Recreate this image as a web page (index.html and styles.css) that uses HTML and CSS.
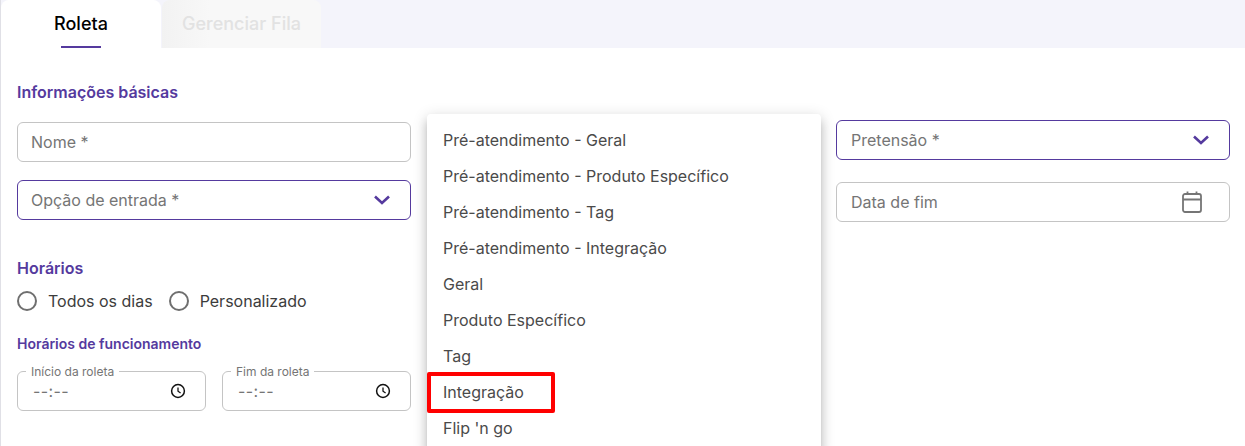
FILE: index.html
```html
<!DOCTYPE html>
<html lang="pt-BR">
<head>
    <meta charset="UTF-8">
    <title>Roleta</title>
    <link rel="stylesheet" href="styles.css">
</head>
<body>
    <div class="tabs">
        <div class="tab active">Roleta</div>
        <div class="tab disabled">Gerenciar Fila</div>
    </div>

    <div class="content">
        <h2 class="section-title">Informações básicas</h2>

        <div class="columns">
            <div class="col col-left">
                <div class="field"><span class="placeholder">Nome *</span></div>
                <div class="field field-select">
                    <span class="placeholder">Opção de entrada *</span>
                    <svg class="chevron" width="18" height="10" viewBox="0 0 18 10"><path d="M2 1.5 L9 8 L16 1.5" fill="none" stroke="#553a9e" stroke-width="2.6"/></svg>
                </div>

                <h2 class="section-title horarios-title">Horários</h2>
                <div class="radios">
                    <label class="radio"><span class="radio-dot"></span>Todos os dias</label>
                    <label class="radio"><span class="radio-dot"></span>Personalizado</label>
                </div>

                <h3 class="sub-title">Horários de funcionamento</h3>
                <div class="times">
                    <div class="field field-time">
                        <span class="legend">Início da roleta</span>
                        <span class="time-value">--:--</span>
                        <svg width="16" height="16" viewBox="0 0 16 16"><circle cx="8" cy="8" r="6.4" fill="none" stroke="#111" stroke-width="1.5"/><path d="M8 4.5 V8.2 L10.6 10" fill="none" stroke="#111" stroke-width="1.3"/></svg>
                    </div>
                    <div class="field field-time">
                        <span class="legend">Fim da roleta</span>
                        <span class="time-value">--:--</span>
                        <svg width="16" height="16" viewBox="0 0 16 16"><circle cx="8" cy="8" r="6.4" fill="none" stroke="#111" stroke-width="1.5"/><path d="M8 4.5 V8.2 L10.6 10" fill="none" stroke="#111" stroke-width="1.3"/></svg>
                    </div>
                </div>
            </div>

            <div class="col col-middle">
                <ul class="menu">
                    <li>Pré-atendimento - Geral</li>
                    <li>Pré-atendimento - Produto Específico</li>
                    <li>Pré-atendimento - Tag</li>
                    <li>Pré-atendimento - Integração</li>
                    <li>Geral</li>
                    <li>Produto Específico</li>
                    <li>Tag</li>
                    <li class="highlighted">Integração</li>
                    <li>Flip 'n go</li>
                </ul>
            </div>

            <div class="col col-right">
                <div class="field field-select">
                    <span class="placeholder">Pretensão *</span>
                    <svg class="chevron" width="18" height="10" viewBox="0 0 18 10"><path d="M2 1.5 L9 8 L16 1.5" fill="none" stroke="#553a9e" stroke-width="2.6"/></svg>
                </div>
                <div class="field field-date">
                    <span class="placeholder">Data de fim</span>
                    <svg width="22" height="24" viewBox="0 0 22 24"><rect x="2" y="4" width="18" height="18" rx="2" fill="none" stroke="#757575" stroke-width="1.8"/><path d="M2 9.5 H20 M6.5 1.5 V5 M15.5 1.5 V5" fill="none" stroke="#757575" stroke-width="1.8"/></svg>
                </div>
            </div>
        </div>
    </div>
</body>
</html>
```

FILE: styles.css
```css
* {
    box-sizing: border-box;
}
html, body {
    height: 100%;
}
body {
    margin: 0;
    font-family: Inter, "Noto Sans", sans-serif;
    background: #fff;
    color: #3c3c3c;
    overflow: hidden;
    border-left: 1px solid #e0e0e6;
}
.tabs {
    display: flex;
    gap: 1px;
    height: 48px;
    background: #f4f4fb;
    margin-left: -1px;
    padding-left: 1px;
}
.tab {
    width: 160px;
    height: 48px;
    display: flex;
    align-items: center;
    justify-content: center;
    font-size: 18px;
    font-weight: 500;
    padding-bottom: 1px;
    border-radius: 8px 8px 0 0;
    position: relative;
}
.tab.active {
    background: #fff;
    color: #000;
}
.tab.active::after {
    content: "";
    position: absolute;
    left: 60px;
    bottom: 0;
    width: 40px;
    height: 2px;
    background: #553a9e;
}
.tab.disabled {
    width: 159px;
    background: linear-gradient(90deg, #f2f2f2, #f8f8f8 30%);
    color: #e2e2e2;
}
.content {
    padding: 35px 15px 0 16px;
}
.section-title {
    margin: 0;
    font-size: 16px;
    line-height: 19px;
    font-weight: 600;
    color: #553a9e;
}
.columns {
    display: grid;
    grid-template-columns: 394px 394px 394px;
    column-gap: 16px;
    margin-top: 20px;
}
.col-right {
    margin-left: -1px;
    margin-right: 1px;
    margin-top: -2px;
    display: flex;
    flex-direction: column;
    gap: 22px;
}
.col-middle {
    position: relative;
}
.field {
    height: 40px;
    border: 1px solid #c4c4c4;
    border-radius: 6px;
    display: flex;
    align-items: center;
    padding: 0 13px;
    font-size: 16px;
    background: #fff;
}
.col-right .field {
    padding-left: 14px;
}
.placeholder {
    color: #757575;
}
.field-select {
    justify-content: space-between;
    border-color: #553a9e;
    padding-right: 19px;
}
.col-left .field-select {
    margin-top: 18px;
}
.field-date {
    justify-content: space-between;
    padding-right: 26px;
}
.horarios-title {
    margin-top: 39px;
}
.radios {
    display: flex;
    gap: 16px;
    margin-top: 11px;
}
.radio {
    display: flex;
    align-items: center;
    gap: 11px;
    font-size: 16px;
    line-height: 24px;
}
.radio-dot {
    width: 20px;
    height: 20px;
    border: 2px solid #6f6f6f;
    border-radius: 50%;
}
.sub-title {
    margin: 23px 0 0;
    font-size: 14px;
    line-height: 16px;
    font-weight: 600;
    color: #553a9e;
}
.times {
    display: flex;
    gap: 16px;
    margin-top: 19px;
}
.field-time {
    flex: 1;
    position: relative;
    justify-content: space-between;
    padding-right: 19px;
}
.legend {
    position: absolute;
    left: 8px;
    top: -8px;
    padding: 0 5px;
    background: #fff;
    font-size: 12px;
    line-height: 15px;
    color: #757575;
}
.time-value {
    color: #757575;
    letter-spacing: 0.4px;
    padding-left: 2px;
}
.menu {
    position: absolute;
    top: -8px;
    left: 0;
    width: 394px;
    height: 340px;
    margin: 0;
    padding: 8px 0;
    list-style: none;
    background: #fff;
    border-radius: 4px;
    box-shadow: 0 5px 5px -3px rgba(0,0,0,.2), 0 8px 10px 1px rgba(0,0,0,.14), 0 3px 14px 2px rgba(0,0,0,.12);
}
.menu li {
    height: 36px;
    line-height: 36px;
    padding: 0 16px;
    font-size: 16px;
    color: #4a4a4a;
}
.menu li.highlighted {
    position: relative;
}
.menu li.highlighted::after {
    content: "";
    box-sizing: border-box;
    position: absolute;
    left: 0;
    top: -2px;
    width: 128px;
    height: 41px;
    border: 4px solid #ff0000;
    border-radius: 2px;
}
```
